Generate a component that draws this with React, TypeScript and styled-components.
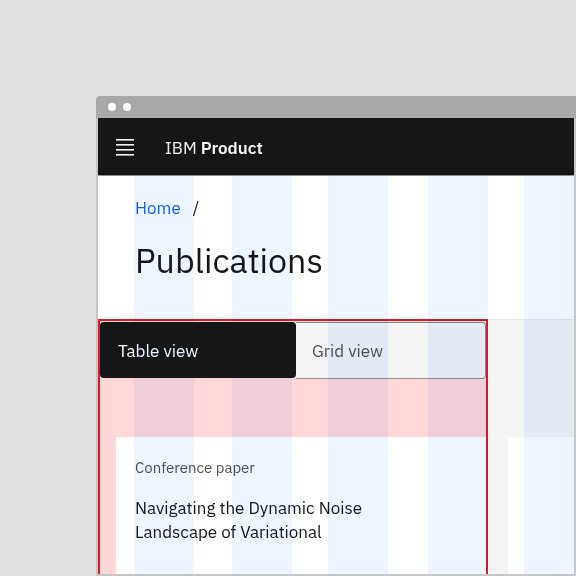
import React from "react";
import styled, { createGlobalStyle } from "styled-components";

const GlobalStyle = createGlobalStyle`
  * { box-sizing: border-box; }
  html, body { margin: 0; padding: 0; }
  body {
    background: #e0e0e0;
    font-family: "IBM Plex Sans", "Noto Sans", sans-serif;
    overflow: hidden;
  }
`;

const Stage = styled.div`
  width: 576px;
  height: 576px;
  padding: 96px 0 0 96px;
  overflow: hidden;
`;

const Window = styled.div`
  width: 480px;
  height: 480px;
  display: flex;
  flex-direction: column;
  border-radius: 4px 0 0 0;
  overflow: hidden;
`;

const TitleBar = styled.div`
  height: 22px;
  flex: none;
  background: #a8a8a8;
  display: flex;
  align-items: center;
  gap: 7px;
  padding-left: 12px;
`;

const Dot = styled.span`
  width: 8px;
  height: 8px;
  border-radius: 50%;
  background: #ffffff;
`;

const Body = styled.div`
  flex: 1;
  display: flex;
  flex-direction: column;
  border: 2px solid #c6c6c6;
  border-top: none;
  min-height: 0;
`;

const Header = styled.header`
  height: 58px;
  flex: none;
  background: #161616;
  border-bottom: 1px solid #8d8d8d;
  display: flex;
  align-items: center;
  padding: 2px 0 0 18px;
  gap: 31px;
  color: #f4f4f4;
`;

const MenuIcon = styled.svg`
  display: block;
  margin-top: -1px;
`;

const ProductName = styled.span`
  font-size: 17px;
  line-height: 20px;
  color: #f4f4f4;
  b {
    font-weight: 600;
  }
`;

const Content = styled.div`
  position: relative;
  flex: 1;
  display: flex;
  flex-direction: column;
  min-height: 0;
  overflow: hidden;
`;

const PageHeader = styled.section`
  height: 143px;
  flex: none;
  background: #ffffff;
  padding: 20px 0 0 37px;
`;

const Breadcrumb = styled.nav`
  display: flex;
  align-items: center;
  gap: 12px;
  font-size: 17px;
  line-height: 24px;
  color: #161616;
`;

const Crumb = styled.a`
  color: #0f62fe;
  text-decoration: none;
`;

const Title = styled.h1`
  margin: 20px 0 0;
  font-size: 34px;
  line-height: 40px;
  font-weight: 400;
  color: #161616;
`;

const Lower = styled.div`
  flex: 1;
  display: flex;
  background: #f4f4f4;
  min-height: 0;
`;

const FocusColumn = styled.div`
  width: 390px;
  flex: none;
  border: 2px solid #da1e28;
  border-bottom: none;
  background: #ffd7d9;
  padding-top: 1px;
  display: flex;
  flex-direction: column;
`;

const Switcher = styled.div`
  display: flex;
  height: 57px;
  flex: none;
`;

const SwitchButton = styled.button<{ $selected?: boolean }>`
  flex: ${(p) => (p.$selected ? "0 0 196px" : "1")};
  margin: 0;
  padding: 1px 0 0 ${(p) => (p.$selected ? "18px" : "16px")};
  text-align: left;
  font-family: inherit;
  font-size: 17px;
  line-height: 20px;
  cursor: pointer;
  background: ${(p) => (p.$selected ? "#161616" : "#f4f4f4")};
  color: ${(p) => (p.$selected ? "#ffffff" : "#525252")};
  border: ${(p) => (p.$selected ? "none" : "1px solid #8d8d8d")};
  border-left: none;
  border-radius: ${(p) => (p.$selected ? "4px" : "0 4px 4px 0")};
  height: ${(p) => (p.$selected ? "56px" : "57px")};
`;

const Spacer = styled.div`
  height: 58px;
  flex: none;
`;

const Card = styled.article<{ $inset?: number }>`
  flex: 1;
  background: #ffffff;
  margin-left: ${(p) => p.$inset ?? 0}px;
  padding: 21px 0 0 19px;
`;

const CardLabel = styled.div`
  font-size: 15px;
  line-height: 20px;
  color: #525252;
`;

const CardTitle = styled.div`
  margin-top: 18px;
  font-size: 17px;
  line-height: 24px;
  color: #161616;
  width: 260px;
`;

const SideColumn = styled.div`
  flex: 1;
  display: flex;
  flex-direction: column;
  padding-left: 20px;
  border-top: 1px solid #e8e8e8;
`;

const SideSpacer = styled.div`
  height: 117px;
  flex: none;
`;

const GridOverlay = styled.div`
  position: absolute;
  inset: 0;
  display: flex;
  pointer-events: none;
`;

const Stripe = styled.div<{ $gap: number; $w: number }>`
  margin-left: ${(p) => p.$gap}px;
  width: ${(p) => p.$w}px;
  height: 100%;
  background: #edf5ff;
  mix-blend-mode: multiply;
`;

const stripes = [
  { gap: 36, w: 60 },
  { gap: 38, w: 60 },
  { gap: 36, w: 60 },
  { gap: 40, w: 60 },
  { gap: 36, w: 50 },
];

export default function App() {
  return (
    <>
      <GlobalStyle />
      <Stage>
        <Window>
          <TitleBar>
            <Dot />
            <Dot />
          </TitleBar>
          <Body>
            <Header>
              <MenuIcon width="18" height="17" viewBox="0 0 18 17" aria-hidden="true">
                <rect x="0" y="0" width="18" height="1.6" fill="#f4f4f4" />
                <rect x="0" y="5" width="18" height="1.6" fill="#f4f4f4" />
                <rect x="0" y="10" width="18" height="1.6" fill="#f4f4f4" />
                <rect x="0" y="15" width="18" height="1.6" fill="#f4f4f4" />
              </MenuIcon>
              <ProductName>
                IBM <b>Product</b>
              </ProductName>
            </Header>
            <Content>
              <PageHeader>
                <Breadcrumb>
                  <Crumb href="#">Home</Crumb>
                  <span>/</span>
                </Breadcrumb>
                <Title>Publications</Title>
              </PageHeader>
              <Lower>
                <FocusColumn>
                  <Switcher>
                    <SwitchButton $selected>Table view</SwitchButton>
                    <SwitchButton>Grid view</SwitchButton>
                  </Switcher>
                  <Spacer />
                  <Card $inset={16}>
                    <CardLabel>Conference paper</CardLabel>
                    <CardTitle>Navigating the Dynamic Noise Landscape of Variational</CardTitle>
                  </Card>
                </FocusColumn>
                <SideColumn>
                  <SideSpacer />
                  <Card />
                </SideColumn>
              </Lower>
              <GridOverlay>
                {stripes.map((s, i) => (
                  <Stripe key={i} $gap={s.gap} $w={s.w} />
                ))}
              </GridOverlay>
            </Content>
          </Body>
        </Window>
      </Stage>
    </>
  );
}
